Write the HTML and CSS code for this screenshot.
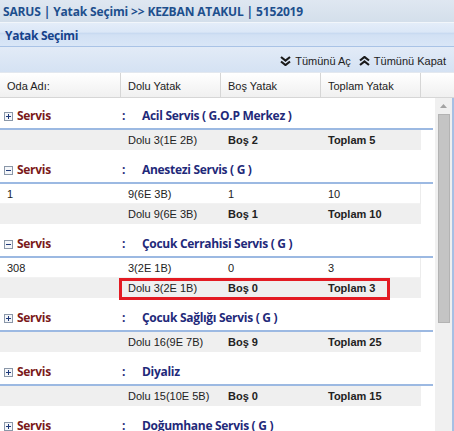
FILE: index.html
```html
<!DOCTYPE html>
<html lang="tr">
<head>
<meta charset="utf-8">
<title>Yatak Seçimi</title>
<link rel="stylesheet" href="styles.css">
</head>
<body>
<div class="titlebar">SARUS | Yatak Seçimi &gt;&gt; KEZBAN ATAKUL | 5152019</div>
<div class="panel">
  <div class="panel-header">Yatak Seçimi</div>
  <div class="toolbar">
    <span class="tb-btn"><svg class="chev" width="11" height="10" viewBox="0 0 11 10"><polyline points="1,1 5.5,4.5 10,1"/><polyline points="1,5.5 5.5,9 10,5.5"/></svg>Tümünü Aç</span>
    <span class="tb-btn"><svg class="chev" width="11" height="10" viewBox="0 0 11 10"><polyline points="1,4.5 5.5,1 10,4.5"/><polyline points="1,9 5.5,5.5 10,9"/></svg>Tümünü Kapat</span>
  </div>
  <div class="col-header">
    <div class="hcell c1">Oda Adı:</div>
    <div class="hcell c2">Dolu Yatak</div>
    <div class="hcell c3">Boş Yatak</div>
    <div class="hcell c4">Toplam Yatak</div>
    <div class="hcell filler"></div>
  </div>
  <div class="body">
    <div class="grid">
      <div class="group">
        <div class="group-hd"><svg class="tog" width="9" height="9" viewBox="0 0 9 9"><rect x="0.5" y="0.5" width="8" height="8"/><path d="M2 4.5h5M4.5 2v5"/></svg><span class="g-label">Servis</span><span class="g-colon">:</span><span class="g-name">Acil Servis ( G.O.P Merkez )</span></div>
        <div class="row summary"><div class="cell c1"></div><div class="cell c2">Dolu 3(1E 2B)</div><div class="cell c3 b">Boş 2</div><div class="cell c4 b">Toplam 5</div></div>
      </div>
      <div class="group">
        <div class="group-hd"><svg class="tog" width="9" height="9" viewBox="0 0 9 9"><rect x="0.5" y="0.5" width="8" height="8"/><path d="M2 4.5h5"/></svg><span class="g-label">Servis</span><span class="g-colon">:</span><span class="g-name">Anestezi Servis ( G )</span></div>
        <div class="row data"><div class="cell c1">1</div><div class="cell c2">9(6E 3B)</div><div class="cell c3">1</div><div class="cell c4">10</div></div>
        <div class="row summary"><div class="cell c1"></div><div class="cell c2">Dolu 9(6E 3B)</div><div class="cell c3 b">Boş 1</div><div class="cell c4 b">Toplam 10</div></div>
      </div>
      <div class="group">
        <div class="group-hd"><svg class="tog" width="9" height="9" viewBox="0 0 9 9"><rect x="0.5" y="0.5" width="8" height="8"/><path d="M2 4.5h5"/></svg><span class="g-label">Servis</span><span class="g-colon">:</span><span class="g-name">Çocuk Cerrahisi Servis ( G )</span></div>
        <div class="row data"><div class="cell c1">308</div><div class="cell c2">3(2E 1B)</div><div class="cell c3">0</div><div class="cell c4">3</div></div>
        <div class="row summary"><div class="cell c1"></div><div class="cell c2">Dolu 3(2E 1B)</div><div class="cell c3 b">Boş 0</div><div class="cell c4 b">Toplam 3</div><span class="highlight"></span></div>
      </div>
      <div class="group">
        <div class="group-hd"><svg class="tog" width="9" height="9" viewBox="0 0 9 9"><rect x="0.5" y="0.5" width="8" height="8"/><path d="M2 4.5h5M4.5 2v5"/></svg><span class="g-label">Servis</span><span class="g-colon">:</span><span class="g-name">Çocuk Sağlığı Servis ( G )</span></div>
        <div class="row summary"><div class="cell c1"></div><div class="cell c2">Dolu 16(9E 7B)</div><div class="cell c3 b">Boş 9</div><div class="cell c4 b">Toplam 25</div></div>
      </div>
      <div class="group">
        <div class="group-hd"><svg class="tog" width="9" height="9" viewBox="0 0 9 9"><rect x="0.5" y="0.5" width="8" height="8"/><path d="M2 4.5h5M4.5 2v5"/></svg><span class="g-label">Servis</span><span class="g-colon">:</span><span class="g-name">Diyaliz</span></div>
        <div class="row summary"><div class="cell c1"></div><div class="cell c2">Dolu 15(10E 5B)</div><div class="cell c3 b">Boş 0</div><div class="cell c4 b">Toplam 15</div></div>
      </div>
      <div class="group">
        <div class="group-hd"><svg class="tog" width="9" height="9" viewBox="0 0 9 9"><rect x="0.5" y="0.5" width="8" height="8"/><path d="M2 4.5h5M4.5 2v5"/></svg><span class="g-label">Servis</span><span class="g-colon">:</span><span class="g-name">Doğumhane Servis ( G )</span></div>
      </div>
    </div>
    <div class="scrollbar">
      <div class="sb-up"><svg width="7" height="4" viewBox="0 0 7 4"><polygon points="0,4 3.5,0 7,4"/></svg></div>
      <div class="sb-thumb"></div>
    </div>
  </div>
</div>
</body>
</html>
```

FILE: styles.css
```css
html, body {
  margin: 0;
  padding: 0;
}
body {
  width: 454px;
  height: 431px;
  overflow: hidden;
  background: #fff;
  font-family: "Liberation Sans", Arial, sans-serif;
  font-size: 11px;
  color: #222;
}
.titlebar {
  height: 23px;
  box-sizing: border-box;
  padding-left: 3px;
  padding-top: 1px;
  line-height: 22px;
  font-family: "Open Sans", "DejaVu Sans", sans-serif;
  font-weight: bold;
  font-size: 12px;
  letter-spacing: -0.15px;
  color: #1d4f8d;
  background: linear-gradient(#dfe7f1, #d4dfeb);
  border-bottom: 1px solid #f2f6fb;
  white-space: nowrap;
}
.panel {
  display: flex;
  flex-direction: column;
  height: 408px;
}
.panel-header {
  height: 24px;
  box-sizing: border-box;
  padding-left: 5px;
  padding-top: 1px;
  line-height: 23px;
  font-family: "Open Sans", "DejaVu Sans", sans-serif;
  font-weight: bold;
  font-size: 12px;
  letter-spacing: -0.3px;
  color: #15428b;
  background: linear-gradient(#e4edf9 0%, #dbe7f7 40%, #c6d8f0 44%, #d2e1f4 52%, #d9e6f7 100%);
  border-bottom: 1px solid #a9c3e6;
}
.toolbar {
  height: 26px;
  box-sizing: border-box;
  display: flex;
  justify-content: flex-end;
  align-items: center;
  gap: 8px;
  padding-right: 8px;
  padding-top: 2px;
  background: linear-gradient(#e2ebf7, #d5e2f3);
  border-bottom: 1px solid #e3e8ef;
}
.tb-btn {
  display: flex;
  align-items: center;
  gap: 4px;
  color: #222;
  font-size: 11px;
}
.chev {
  fill: none;
  stroke: #1a1a1a;
  stroke-width: 2.2;
}
.col-header {
  height: 25px;
  box-sizing: border-box;
  display: flex;
  background: linear-gradient(#ffffff, #f0f0f0);
  border-bottom: 1px solid #d6d6d6;
}
.hcell {
  box-sizing: border-box;
  height: 24px;
  padding-top: 3px;
  line-height: 21px;
  padding-left: 7px;
  border-right: 1px solid #d6d6d6;
  color: #222;
}
.c1 { width: 121px; }
.c2, .c3, .c4 { width: 100px; }
.hcell.filler {
  flex: 1;
  border-right: none;
}
.body {
  flex: 1;
  display: flex;
  min-height: 0;
}
.grid {
  width: 433px;
  overflow: hidden;
}
.group {
  margin-bottom: 2px;
}
.group-hd {
  display: flex;
  align-items: center;
  height: 32px;
  box-sizing: border-box;
  padding-top: 10px;
  padding-bottom: 4px;
  line-height: 16px;
  border-bottom: 2px solid #9cb9e2;
  font-family: "Open Sans", "DejaVu Sans", sans-serif;
  font-weight: bold;
  font-size: 12px;
  letter-spacing: -0.3px;
}
.tog {
  margin-left: 4px;
  margin-right: 4px;
  flex: none;
}
.tog rect {
  fill: #f4f6f9;
  stroke: #8a97a8;
}
.tog path {
  stroke: #1f3a7a;
  stroke-width: 1;
}
.g-label {
  width: 105px;
  color: #7b1a1a;
}
.g-colon {
  width: 20px;
  color: #1f2a7a;
}
.g-name {
  color: #1f2a7a;
}
.row {
  display: flex;
  width: 421px;
  height: 20px;
  line-height: 20px;
  position: relative;
}
.row.data {
  background: #fff;
  box-shadow: inset -1px 0 0 #ececec, inset 0 -1px 0 #f2f2f2;
}
.row.summary {
  background: #efefef;
}
.cell {
  box-sizing: border-box;
  padding-left: 7px;
  white-space: nowrap;
}
.cell.b {
  font-weight: bold;
}
.highlight {
  position: absolute;
  left: 119px;
  top: 0;
  width: 271px;
  height: 22px;
  box-sizing: border-box;
  border: 3px solid #e31b23;
}
.scrollbar {
  width: 17px;
  margin-left: 2px;
  background: #f0f0f0;
  border-right: 2px solid #a6c0e4;
  display: flex;
  flex-direction: column;
  align-items: center;
}
.sb-up {
  height: 16px;
  width: 17px;
  display: flex;
  align-items: center;
  justify-content: center;
}
.sb-up polygon {
  fill: #a3a3a3;
}
.sb-thumb {
  width: 12px;
  height: 209px;
  box-sizing: border-box;
  background: #c4c4c4;
  border: 1px solid #b3b3b3;
}
```
